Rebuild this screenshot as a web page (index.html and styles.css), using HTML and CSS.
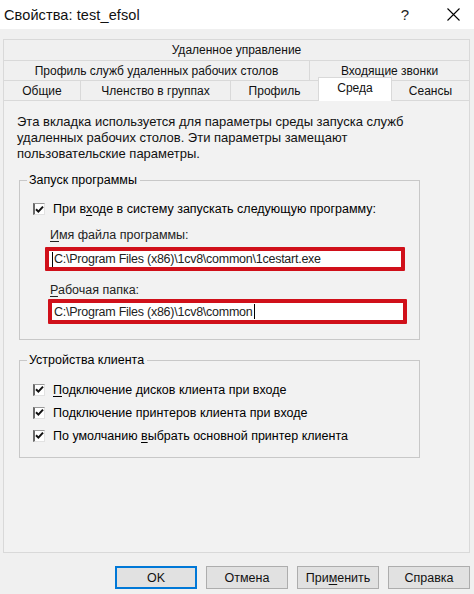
FILE: index.html
```html
<!DOCTYPE html>
<html lang="ru">
<head>
<meta charset="utf-8">
<title>Свойства: test_efsol</title>
<link rel="stylesheet" href="styles.css">
</head>
<body>
<div class="window">
  <header class="titlebar">
    <span class="title">Свойства: test_efsol</span>
    <div class="title-controls">
      <span class="help">?</span>
      <svg class="close" width="13" height="13" viewBox="0 0 13 13"><path d="M0.5 0.5 L12.5 12.5 M12.5 0.5 L0.5 12.5" stroke="#000" stroke-width="1.1" fill="none"/></svg>
    </div>
  </header>

  <div class="body">
    <div class="tabs">
      <div class="tab-row row-1">
        <div class="tab">Удаленное управление</div>
      </div>
      <div class="tab-row row-2">
        <div class="tab">Профиль служб удаленных рабочих столов</div>
        <div class="tab">Входящие звонки</div>
      </div>
      <div class="tab-row row-3">
        <div class="tab">Общие</div>
        <div class="tab">Членство в группах</div>
        <div class="tab">Профиль</div>
        <div class="tab selected">Среда</div>
        <div class="tab">Сеансы</div>
      </div>
    </div>

    <section class="panel">
      <p class="desc">Эта вкладка используется для параметры среды запуска служб<br>удаленных рабочих столов. Эти параметры замещают<br>пользовательские параметры.</p>

      <div class="group group-start">
        <div class="group-title">Запуск программы</div>
        <div class="check-row first">
          <span class="checkbox"><svg width="9" height="9" viewBox="0 0 9 9"><path d="M1 4.2 L3.4 6.6 L8 1.6" stroke="#111" stroke-width="2" fill="none"/></svg></span>
          <span>При в<u>х</u>оде в систему запускать следующую программу:</span>
        </div>
        <div class="field-label"><u>И</u>мя файла программы:</div>
        <div class="input input-1"><span class="caret"></span>C:\Program Files (x86)\1cv8\common\1cestart.exe</div>
        <div class="field-label second"><u>Р</u>абочая папка:</div>
        <div class="input input-2">C:\Program Files (x86)\1cv8\common<span class="caret"></span></div>
      </div>

      <div class="group group-devices">
        <div class="group-title">Устройства клиента</div>
        <div class="check-row lead">
          <span class="checkbox"><svg width="9" height="9" viewBox="0 0 9 9"><path d="M1 4.2 L3.4 6.6 L8 1.6" stroke="#111" stroke-width="2" fill="none"/></svg></span>
          <span><u>П</u>одключение дисков клиента при входе</span>
        </div>
        <div class="check-row">
          <span class="checkbox"><svg width="9" height="9" viewBox="0 0 9 9"><path d="M1 4.2 L3.4 6.6 L8 1.6" stroke="#111" stroke-width="2" fill="none"/></svg></span>
          <span>По<u>д</u>ключение принтеров клиента при входе</span>
        </div>
        <div class="check-row">
          <span class="checkbox"><svg width="9" height="9" viewBox="0 0 9 9"><path d="M1 4.2 L3.4 6.6 L8 1.6" stroke="#111" stroke-width="2" fill="none"/></svg></span>
          <span>По умолчанию <u>в</u>ыбрать основной принтер клиента</span>
        </div>
      </div>
    </section>

    <footer class="buttons">
      <button class="btn default">OK</button>
      <button class="btn">Отмена</button>
      <button class="btn">При<u>м</u>енить</button>
      <button class="btn">Справка</button>
    </footer>
  </div>
</div>
</body>
</html>
```

FILE: styles.css
```css
* { box-sizing: border-box; }

html, body {
  margin: 0;
  padding: 0;
}

body {
  width: 474px;
  height: 594px;
  overflow: hidden;
  background: #f0f0f0;
  font-family: "Liberation Sans", Arial, sans-serif;
  font-size: 12.5px;
  color: #000;
}

.window {
  display: flex;
  flex-direction: column;
  height: 594px;
}

.titlebar {
  height: 29px;
  background: #ffffff;
  display: flex;
  align-items: center;
  justify-content: space-between;
  padding: 0 14px 0 4px;
}

.title {
  font-size: 14.5px;
  letter-spacing: 0.1px;
  color: #111;
}

.title-controls {
  display: flex;
  align-items: center;
  gap: 38px;
}

.help {
  font-size: 15px;
  color: #222;
}

.close { display: block; }

.body {
  flex: 1;
  display: flex;
  flex-direction: column;
  padding: 10px 4px 0 3px;
}

/* Tabs */
.tabs {
  display: flex;
  flex-direction: column;
}

.tab-row {
  display: grid;
  height: 20px;
}

.row-1 { height: 21px; grid-template-columns: 1fr; }
.row-2 { grid-template-columns: 306px 1fr; }
.row-3 { grid-template-columns: 77px 150px 88px 74px 1fr; }

.tab {
  display: flex;
  align-items: center;
  justify-content: center;
  border-top: 1px solid #d9d9d9;
  border-left: 1px solid #d9d9d9;
  background: #f0f0f0;
  font-size: 12px;
  line-height: 16px;
  white-space: nowrap;
  color: #111;
}

.tab:last-child { border-right: 1px solid #d9d9d9; }

.tab.selected {
  background: #ffffff;
  margin-top: -3px;
  margin-bottom: -1px;
  padding-bottom: 3px;
  border-right: 1px solid #d9d9d9;
  position: relative;
  z-index: 2;
}

.tab.selected + .tab { border-left: none; }

/* Panel */
.panel {
  height: 453px;
  border: 1px solid #d9d9d9;
  background: #f2f2f2;
  padding: 13px 0 0 13px;
}

.desc {
  margin: 0;
  font-size: 13px;
  line-height: 16px;
  color: #111;
}

.group {
  margin: 18px 0 0 2px;
  width: 401px;
  border: 1px solid #c8c8c8;
}

.group-title {
  width: fit-content;
  margin: -9px 0 0 0;
  padding: 0 3px 0 2px;
  background: #f2f2f2;
  line-height: 16px;
}

.group-start { padding: 0 0 15px 7px; }
.group-devices { margin-top: 20px; padding: 0 0 10px 7px; }

.check-row {
  display: flex;
  align-items: center;
  gap: 8px;
  height: 23px;
  padding-left: 6px;
}

.check-row.first { height: 20px; margin-top: 11px; }
.check-row.lead { margin-top: 10px; }

.checkbox {
  width: 12px;
  height: 12px;
  display: flex;
  align-items: center;
  justify-content: center;
  background: #ffffff;
  border-left: 2px solid #6a6a6a;
  border-top: 1px solid #9a9a9a;
  border-right: 1px solid #e2e2e2;
  border-bottom: 1px solid #e2e2e2;
}

.checkbox svg { display: block; }

u { text-decoration-thickness: 1px; text-underline-offset: 2px; }

.field-label {
  line-height: 16px;
  margin: 8px 0 4px 23px;
  color: #222;
}

.field-label.second { margin: 11px 0 1px 23px; }

.input {
  height: 24px;
  border: 4px solid #d0101a;
  border-radius: 1px;
  background: #ffffff;
  display: flex;
  align-items: center;
  padding-left: 2px;
  font-size: 12.5px;
  letter-spacing: -0.25px;
  color: #222;
  white-space: nowrap;
}

.input-1 { width: 360px; margin-left: 18px; }
.input-2 { width: 359px; margin-left: 21px; height: 25px; }

.caret {
  display: inline-block;
  width: 1px;
  height: 15px;
  background: #000;
  margin: 0 1px;
}

/* Buttons */
.buttons {
  display: flex;
  justify-content: flex-end;
  gap: 9px;
  padding-top: 13px;
}

.btn {
  width: 82px;
  height: 23px;
  border: 1px solid #adadad;
  background: #e1e1e1;
  font-family: "Liberation Sans", Arial, sans-serif;
  font-size: 12.5px;
  color: #111;
  padding: 0;
  border-radius: 0;
}

.btn.default {
  border: 2px solid #0078d7;
}
```
